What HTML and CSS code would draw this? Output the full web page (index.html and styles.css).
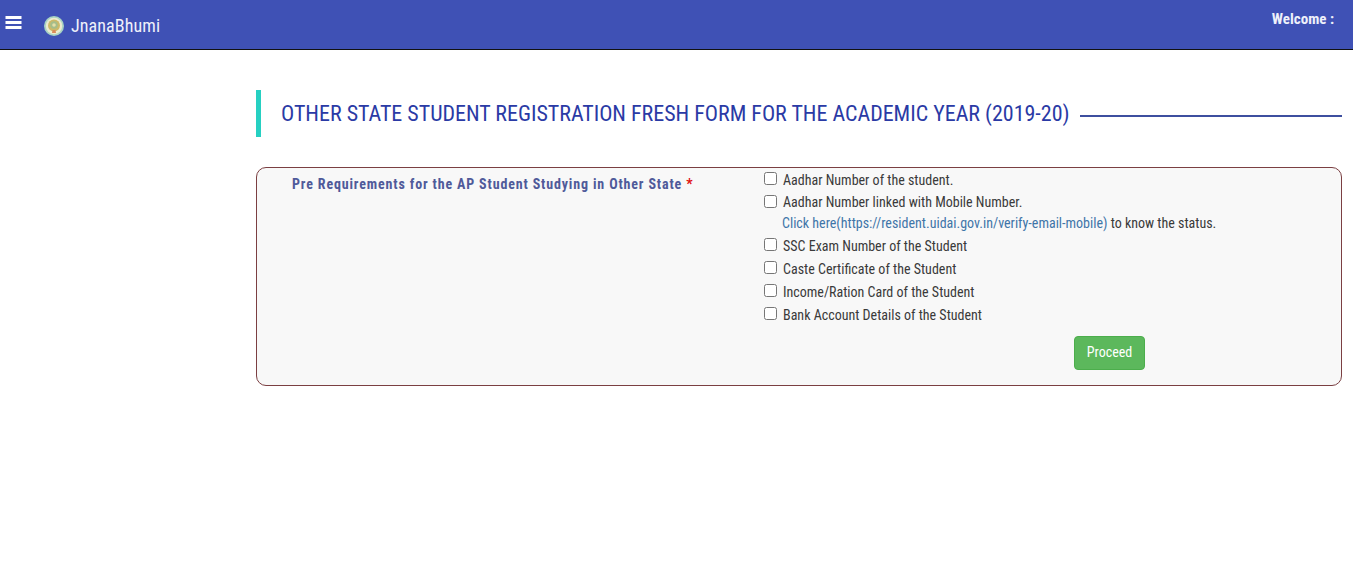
FILE: index.html
```html
<!DOCTYPE html>
<html lang="en">
<head>
<meta charset="utf-8">
<title>JnanaBhumi</title>
<link rel="stylesheet" href="styles.css">
</head>
<body>
<header class="topbar">
  <div class="brand">
    <svg class="menu-icon" viewBox="0 0 16 13" aria-hidden="true"><path d="M0 0h16v3H0zM0 5h16v3H0zM0 10h16v3H0z" fill="#fff"/></svg>
    <svg class="logo" viewBox="0 0 20 20" aria-hidden="true">
      <circle cx="10" cy="10" r="10" fill="#a9d3c4"/>
      <circle cx="10" cy="10" r="8.2" fill="#ecebd0"/>
      <circle cx="10" cy="9.5" r="6" fill="#cdb968"/>
      <circle cx="10" cy="9" r="3.8" fill="#a5bd8a"/>
      <circle cx="10" cy="9" r="1.8" fill="#e4dfa8"/>
      <path d="M8.5 14h3l.5 3H8z" fill="#d98a5a"/>
    </svg>
    <span class="brand-name">JnanaBhumi</span>
  </div>
  <div class="welcome">Welcome :</div>
</header>
<main class="content">
  <div class="title-row">
    <h1 class="title">OTHER STATE STUDENT REGISTRATION FRESH FORM FOR THE ACADEMIC YEAR (2019-20)</h1>
    <span class="title-line"></span>
  </div>
  <form class="panel">
    <div class="label-col">
      <span class="req-label">Pre Requirements for the AP Student Studying in Other State <span class="star">*</span></span>
    </div>
    <div class="check-col">
      <label class="check"><input type="checkbox"><span>Aadhar Number of the student.</span></label>
      <label class="check check-tall"><input type="checkbox"><span>Aadhar Number linked with Mobile Number.<br><span class="note"><a href="#">Click here(https://resident.uidai.gov.in/verify-email-mobile)</a> to know the status.</span></span></label>
      <label class="check"><input type="checkbox"><span>SSC Exam Number of the Student</span></label>
      <label class="check"><input type="checkbox"><span>Caste Certificate of the Student</span></label>
      <label class="check"><input type="checkbox"><span>Income/Ration Card of the Student</span></label>
      <label class="check"><input type="checkbox"><span>Bank Account Details of the Student</span></label>
      <div class="actions"><button type="button" class="proceed">Proceed</button></div>
    </div>
  </form>
</main>
</body>
</html>
```
FILE: styles.css
```css
* { box-sizing: border-box; }
html, body { margin: 0; height: 100%; background: #fff; }
body { font-family: Roboto, "Liberation Sans", sans-serif; font-stretch: 75%; overflow: hidden; }

.topbar {
  height: 50px;
  background: #3f51b5;
  border-bottom: 1px solid #111;
  display: flex;
  justify-content: space-between;
  color: #fff;
}
.brand { display: flex; align-items: center; padding-left: 5px; height: 49px; }
.menu-icon { width: 17px; height: 13px; margin: -4px 0 0 0; }
.logo { width: 20px; height: 20px; margin: 2px 0 0 22px; }
.brand-name { margin: 2px 0 0 7px; font-size: 18px; font-weight: 400; letter-spacing: 0.08px; color: #eef0fa; }
.welcome { padding: 10px 19px 0 0; font-size: 15px; font-weight: 700; letter-spacing: 0; color: #eef0fa; }

.content { padding: 40px 11px 0 256px; }
.title-row {
  height: 47px;
  border-left: 5px solid #26d0c2;
  padding-left: 20px;
  display: flex;
  align-items: center;
}
.title { margin: 0; font-size: 22px; font-weight: 400; color: #2a3aa5; white-space: nowrap; letter-spacing: -0.01px; }
.title-line { flex: 1; height: 2px; background: #3d4f9f; margin: 5px 0 0 10px; }

.panel {
  margin-top: 30px;
  height: 219px;
  border: 1px solid #7b3f42;
  border-radius: 10px;
  background: #f8f8f8;
  display: flex;
}
.label-col { width: 507px; padding: 6px 0 0 35px; }
.req-label { font-size: 14px; font-weight: 700; letter-spacing: 0.85px; color: #4f5a9a; white-space: nowrap; }
.star { color: #e01010; }

.check-col { flex: 1; padding-top: 1px; font-size: 14px; letter-spacing: 0; color: #3a3a3a; }
.check { display: flex; align-items: flex-start; height: 23px; line-height: 22px; }
.check-tall { height: 43px; line-height: 21px; }
.check input { width: 13px; height: 13px; margin: 3px 6px 0 0; flex: none; }
.note { margin-left: -1px; }
.note a { color: #3f75a8; text-decoration: none; }
.actions { margin-top: 9px; padding-left: 310px; }
.proceed {
  width: 71px;
  height: 34px;
  padding: 0 0 2px;
  border: 1px solid #4cae4c;
  border-radius: 4px;
  background: #5cb85c;
  color: #fff;
  font: inherit;
  font-stretch: 75%;
}
```
